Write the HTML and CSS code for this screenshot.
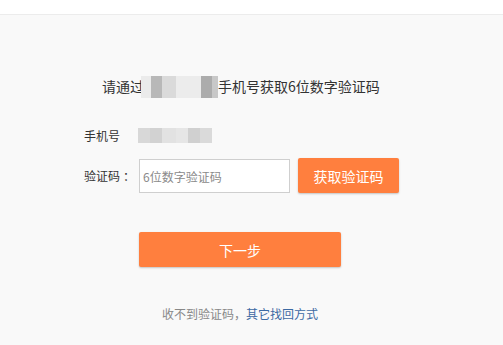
FILE: index.html
```html
<!DOCTYPE html>
<html lang="zh-CN">
<head>
<meta charset="utf-8">
<title>验证手机号</title>
<link rel="stylesheet" href="styles.css">
</head>
<body>
<div class="topbar"></div>
<main class="panel">
  <p class="hint">请通过<span class="mosaic mosaic-lg"><i class="m1"></i><i class="m2"></i><i class="m3"></i><i class="m4"></i><i class="m5"></i><i class="m6"></i></span>手机号获取6位数字验证码</p>
  <div class="row row-phone">
    <span class="label">手机号</span>
    <span class="mosaic mosaic-sm"><i class="s1"></i><i class="s2"></i><i class="s3"></i><i class="s4"></i><i class="s5"></i><i class="s6"></i></span>
  </div>
  <div class="row row-code">
    <span class="label">验证码<span class="colon">：</span></span>
    <input class="code-input" type="text" placeholder="6位数字验证码">
    <button class="btn btn-get" type="button">获取验证码</button>
  </div>
  <div class="next-wrap">
    <button class="btn btn-next" type="button">下一步</button>
  </div>
  <p class="help">收不到验证码，<a href="#" class="link">其它找回方式</a></p>
</main>
</body>
</html>
```
FILE: styles.css
```css
* { box-sizing: border-box; }
html, body { margin: 0; padding: 0; }
body {
  background: #f9f9f9;
  font-family: "Noto Sans CJK SC", "Liberation Sans", sans-serif;
  color: #333;
  width: 503px;
  height: 345px;
  overflow: hidden;
}
.topbar {
  height: 15px;
  background: #fff;
  border-bottom: 1px solid #ececec;
}
.panel {
  width: 316px;
  margin-left: 84px;
  padding-top: 61px;
}
.hint {
  margin: 0;
  font-size: 14px;
  line-height: 20px;
  height: 20px;
  padding-left: 18px;
  white-space: nowrap;
  color: #333;
}
.mosaic {
  display: inline-flex;
  vertical-align: middle;
}
.mosaic i { display: block; height: 100%; }
.mosaic-lg {
  width: 77px;
  height: 22px;
  margin-left: -3px;
  margin-right: 0;
  background: #ececec;
  border-radius: 10px 12px 4px 4px;
  position: relative;
  top: -1px;
}
.mosaic-lg .m1 { width: 10px; background: #ebebeb; }
.mosaic-lg .m2 { width: 11px; background: #b8b8b8; }
.mosaic-lg .m3 { width: 14px; background: #dadada; }
.mosaic-lg .m4 { width: 25px; background: #ececec; }
.mosaic-lg .m5 { width: 11px; background: #acacac; }
.mosaic-lg .m6 { width: 6px; background: #c8c8c8; }
.row {
  display: flex;
  align-items: center;
}
.label {
  width: 55px;
  flex: none;
  font-size: 12px;
  color: #333;
}
.colon { margin-left: 3px; }
.row-phone {
  margin-top: 29px;
  height: 20px;
}
.mosaic-sm {
  width: 74px;
  height: 15px;
  margin-left: -1px;
}
.mosaic-sm .s1 { width: 12px; background: #d8d8d8; }
.mosaic-sm .s2 { width: 12px; background: #d2d2d2; }
.mosaic-sm .s3 { width: 14px; background: #e2e2e2; }
.mosaic-sm .s4 { width: 12px; background: #e6e6e6; }
.mosaic-sm .s5 { width: 12px; background: #d0d0d0; }
.mosaic-sm .s6 { width: 12px; background: #dadada; }
.row-code {
  margin-top: 13px;
  height: 35px;
}
.code-input {
  width: 151px;
  height: 34px;
  margin-top: 1px;
  border: 1px solid #cfcfcf;
  background: #fff;
  padding: 0 3px;
  font-family: inherit;
  font-size: 12px;
  color: #333;
  outline: none;
}
.code-input::placeholder { color: #8a8a8a; }
.btn {
  border: none;
  border-radius: 2px;
  background: #ff7f3e;
  color: #fff;
  font-family: inherit;
  font-size: 14px;
  box-shadow: 0 1px 2px rgba(0,0,0,0.22);
  cursor: pointer;
  padding: 0;
}
.btn-get {
  width: 101px;
  height: 35px;
  margin-left: 8px;
}
.next-wrap {
  margin-top: 39px;
  padding-left: 55px;
}
.btn-next {
  display: block;
  width: 202px;
  height: 35px;
}
.help {
  margin: 37px 0 0;
  padding-left: 78px;
  font-size: 12px;
  line-height: 20px;
  color: #888;
}
.link {
  color: #3d6aa3;
  text-decoration: none;
}
```
